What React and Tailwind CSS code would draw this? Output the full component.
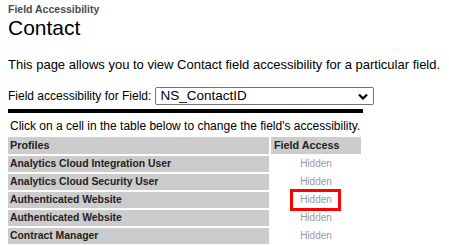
const PROFILES = [
  'Analytics Cloud Integration User',
  'Analytics Cloud Security User',
  'Authenticated Website',
  'Authenticated Website',
  'Contract Manager',
]

function Chevron() {
  return (
    <svg width="10" height="7" viewBox="0 0 10 7">
      <path d="M1 1.5 L5 5.5 L9 1.5" fill="none" stroke="#000" strokeWidth="2.2" />
    </svg>
  )
}

export default function App() {
  return (
    <div className="w-[449px] h-[245px] overflow-hidden bg-white px-2 pt-[3px] font-['Liberation_Sans',Arial,sans-serif] text-black">
      <div className="text-[10.5px] font-bold leading-[12px] text-[#4a4a56]">Field Accessibility</div>
      <h1 className="mt-[1px] text-[21px] leading-[24px]">Contact</h1>

      <p className="mt-[17px] text-[13px] leading-[16px]">
        This page allows you to view Contact field accessibility for a particular field.
      </p>

      <div className="mt-[14px] flex items-center gap-[4px]">
        <span className="text-[12px] leading-[14px]">Field accessibility for Field:</span>
        <div className="flex h-[18px] w-[219px] items-center justify-between rounded-[2px] border border-[#767676] pl-[4px] pr-[5px]">
          <span className="text-[13.5px] leading-[16px]">NS_ContactID</span>
          <Chevron />
        </div>
      </div>

      <div className="mt-[4px] h-[4px] w-[355px] bg-black" />

      <div className="mt-[6px] pl-[2px] text-[12px] leading-[14px]">
        Click on a cell in the table below to change the field's accessibility.
      </div>

      <div className="mt-[4px] grid grid-cols-[261px_90px] gap-[2px]">
        <div className="h-[17px] bg-[#cccccc] pl-[2px] text-[10.8px] font-bold leading-[17px] text-[#222]">Profiles</div>
        <div className="h-[17px] bg-[#cccccc] pl-[3px] text-[10.8px] font-bold leading-[17px] text-[#222]">Field Access</div>
        {PROFILES.map((name, i) => (
          <div key={i} className="contents">
            <div className="h-[16px] bg-[#cccccc] pl-[2px] text-[10.4px] font-bold leading-[16px] text-[#222]">{name}</div>
            <div className="relative h-[16px] text-center text-[10px] leading-[16px] text-[#999]">
              Hidden
              {i === 2 && (
                <div className="absolute left-[19px] top-[-3px] h-[22px] w-[51px] border-[3px] border-[#ff0000]" />
              )}
            </div>
          </div>
        ))}
      </div>
    </div>
  )
}
